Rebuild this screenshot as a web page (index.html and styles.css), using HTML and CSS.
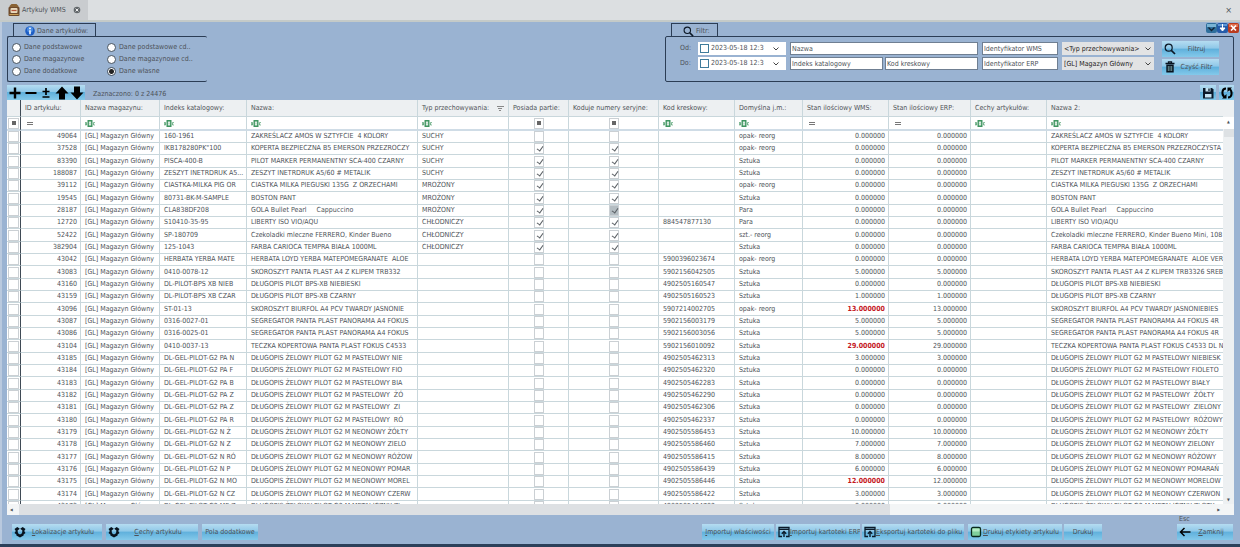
FILE: index.html
```html
<!DOCTYPE html>
<html lang="pl">
<head>
<meta charset="utf-8">
<title>Artykuły WMS</title>
<link rel="stylesheet" href="styles.css">
</head>
<body>
<svg class="defs" aria-hidden="true">
  <symbol id="search" viewBox="0 0 12 12"><circle cx="4.7" cy="4.7" r="3.5" fill="none" stroke="#0c1826" stroke-width="1.2"/><path d="M7.3 7.3 11 11" stroke="#0c1826" stroke-width="1.7"/></symbol>
  <symbol id="box" viewBox="0 0 12 12"><path d="M3.300 1 5.800 2.800 3.600 4.600 4 7.200 6 8.400 8 7.200 8.400 4.600 6.200 2.800 8.700 1 11.500 3 10.200 5 11.500 7 9.600 8.400 9.600 9.400 6 11.600 2.400 9.400 2.400 8.400 .5 7 1.800 5 .5 3z" fill="#08131f"/></symbol>
  <symbol id="window" viewBox="0 0 12 12"><path d="M4 10.500H1V1.500h10v9H8M1 3.300h10" fill="none" stroke="#0a1a2a" stroke-width="1.300"/><path d="M6 11V6M3.800 7.800 6 5.500 8.200 7.800" fill="none" stroke="#0a1a2a" stroke-width="1.400"/></symbol>
  <symbol id="chevron" viewBox="0 0 8 8"><path d="M1.500 2.500 4 5 6.500 2.500" fill="none" stroke="#444" stroke-width="1"/></symbol>
  <symbol id="abc" viewBox="0 0 10 7"><rect x="2.500" width="5" height="7" fill="#3f9560"/><rect x="4.300" y="2" width="1.400" height="3" fill="none" stroke="#fff" stroke-width=".8"/><path d="M.3 2.500h1.200v2.500H.3zM9.800 2.500H8.600v2.500h1.200" fill="none" stroke="#4a9a68" stroke-width=".8"/></symbol>
  <symbol id="equals" viewBox="0 0 10 7"><path d="M2 2.500h6M2 4.500h6" stroke="#777" stroke-width="1"/></symbol>
</svg>
<div class="app">
  <header class="tabs">
    <div class="tab">
      <svg class="tab-icon" viewBox="0 0 11 12"><path d="M1 2 3 0h5l2 2v2H1z" fill="#8a6335"/><rect y="3" width="11" height="9" rx="1" fill="#6f4a2c"/><rect x="2" y="4" width="7" height="5" rx="1" fill="#e8d9bd"/><path d="M3 6.500h5" stroke="#b5553c" stroke-width="1.200"/><path d="M1 10.500h9" stroke="#c79a55"/></svg>
      <span>Artykuły WMS</span>
      <button class="tab-close" aria-label="Zamknij kartę"><svg viewBox="0 0 8 8"><circle cx="4" cy="4" r="3.300" fill="#62676b"/><path d="M2.600 2.600 5.400 5.400M5.400 2.600 2.600 5.400" stroke="#eee" stroke-width="1"/></svg></button>
    </div>
    <button class="all-close" aria-label="Zamknij">×</button>
  </header>

  <main class="body">
    <div class="window-buttons">
      <button aria-label="Minimalizuj"><svg viewBox="0 0 11 10"><rect width="11" height="10" rx="2" fill="#2e6f9c"/><path d="M1 1h9v3H1z" fill="#79b4d5"/><path d="M2.500 4.500 5.500 7.500 8.500 4.500" fill="none" stroke="#123" stroke-width="1.300"/></svg></button>
      <button aria-label="Przywróć"><svg viewBox="0 0 11 10"><rect width="11" height="10" rx="2" fill="#245ba8"/><path d="M1 1h9v2H1z" fill="#5d97d6"/><path d="M5.500 1v4M3 5h5L5.500 8z" fill="#fff" stroke="#fff"/></svg></button>
      <button aria-label="Zamknij okno"><svg viewBox="0 0 11 10"><rect width="11" height="10" rx="2" fill="#b93a1d"/><path d="M1 1h9v3H1z" fill="#e0714f"/><path d="M3 2.500 8 7.500M8 2.500 3 7.500" stroke="#fff" stroke-width="1.700"/></svg></button>
    </div>

    <div class="panels">
      <fieldset class="panel data-panel">
        <legend class="panel-title"><svg class="icon-10" viewBox="0 0 10 10"><circle cx="5" cy="5" r="4.800" fill="#1e5ec4"/><circle cx="5" cy="3.500" r="3" fill="#4a8be0"/><path d="M5 4.200v4" stroke="#fff" stroke-width="1.500"/><circle cx="5" cy="2.400" r=".9" fill="#fff"/></svg>Dane artykułów:</legend>
        <div class="panel-box radios">
          <label><input type="radio" name="data">Dane podstawowe</label>
          <label><input type="radio" name="data">Dane podstawowe cd..</label>
          <label><input type="radio" name="data">Dane magazynowe</label>
          <label><input type="radio" name="data">Dane magazynowe cd..</label>
          <label><input type="radio" name="data">Dane dodatkowe</label>
          <label><input type="radio" name="data" checked>Dane własne</label>
        </div>
      </fieldset>

      <fieldset class="panel filter-panel">
        <legend class="panel-title"><svg class="icon-11"><use href="#search"/></svg>Filtr:</legend>
        <div class="panel-box filters">
          <div class="dates">
            <label for="from">Od:</label>
            <div class="date"><input type="checkbox" class="date-check" aria-label="Użyj daty od"><input id="from" type="text" value="2023-05-18 12:3"><button aria-label="Wybierz datę"><svg><use href="#chevron"/></svg></button></div>
            <label for="to">Do:</label>
            <div class="date"><input type="checkbox" class="date-check" aria-label="Użyj daty do"><input id="to" type="text" value="2023-05-18 12:3"><button aria-label="Wybierz datę"><svg><use href="#chevron"/></svg></button></div>
          </div>
          <div class="texts">
            <input class="wide" type="text" placeholder="Nazwa" aria-label="Nazwa">
            <input type="text" placeholder="Indeks katalogowy" aria-label="Indeks katalogowy">
            <input type="text" placeholder="Kod kreskowy" aria-label="Kod kreskowy">
          </div>
          <div class="stack idents">
            <input type="text" placeholder="Identyfikator WMS" aria-label="Identyfikator WMS">
            <input type="text" placeholder="Identyfikator ERP" aria-label="Identyfikator ERP">
          </div>
          <div class="stack selects">
            <div class="select"><select aria-label="Typ przechowywania"><option>&lt;Typ przechowywania&gt;</option></select><svg><use href="#chevron"/></svg></div>
            <div class="select"><select aria-label="Magazyn"><option>[GL] Magazyn Główny</option></select><svg><use href="#chevron"/></svg></div>
          </div>
          <div class="stack actions">
            <button class="glossy"><svg><use href="#search"/></svg><span>Filtruj</span></button>
            <button class="glossy"><svg viewBox="0 0 12 12"><path d="M1.500 2.500h9M4.500 2V.8h3V2" fill="none" stroke="#08131f" stroke-width="1.300"/><path d="M2.300 3.500h7.400v8H2.300z" fill="#08131f"/><path d="M4.300 5v5M6 5v5M7.700 5v5" stroke="#9cc" stroke-width=".7"/></svg><span>Czyść Filtr</span></button>
          </div>
        </div>
      </fieldset>
    </div>

    <div class="toolbar">
      <div class="tools">
        <button class="glossy" aria-label="Zaznacz"><svg viewBox="0 0 14 14"><path d="M7 1.500v11M1.500 7h11" stroke="#000" stroke-width="2.400"/></svg></button>
        <button class="glossy" aria-label="Odznacz"><svg viewBox="0 0 14 14"><path d="M1.500 7h11" stroke="#000" stroke-width="2"/></svg></button>
        <button class="glossy" aria-label="Odwróć"><svg viewBox="0 0 14 14"><path d="M7 2v7M3.500 5.500h7M3.500 11h7" stroke="#000" stroke-width="1.700"/></svg></button>
        <button class="glossy" aria-label="W górę"><svg viewBox="0 0 14 14"><path d="M7 .5 13.500 7.500H10V13.500H4V7.500H.5z"/></svg></button>
        <button class="glossy" aria-label="W dół"><svg viewBox="0 0 14 14"><path d="M7 13.500 13.500 6.500H10V.5H4v6H.5z"/></svg></button>
      </div>
      <span class="count">Zaznaczono: 0 z 24476</span>
      <div class="tools right">
        <button class="glossy" aria-label="Zapisz"><svg viewBox="0 0 14 14"><path d="M2 2h9l1.500 1.500V12.500H2z" fill="#0a1a2a"/><path d="M4.500 2h5v3.500h-5zM4 8h6.500v3.500H4z" fill="#c5e4f3"/><path d="M8 2.500v2.500" stroke="#0a1a2a" stroke-width="1.300"/></svg></button>
        <button class="glossy" aria-label="Odśwież"><svg viewBox="0 0 14 14"><path d="M6 2.500C1.500 2.500 1.500 9 4.500 11M8 11.500c4.500 0 4.500-6.500 1.500-8.500" fill="none" stroke="#000" stroke-width="2"/><path d="M2 12.500h4.500V8zM12 1.500H7.500V6z"/></svg></button>
      </div>
    </div>

    <section class="grid">
      <div class="view">
        <table>
          <colgroup><col class="c-check"><col class="c-id"><col class="c-store"><col class="c-index"><col class="c-name"><col class="c-type"><col class="c-batch"><col class="c-serial"><col class="c-code"><col class="c-unit"><col class="c-wms"><col class="c-erp"><col class="c-feat"><col></colgroup>
          <thead>
            <tr class="head"><th></th><th>ID artykułu:</th><th>Nazwa magazynu:</th><th>Indeks katalogowy:</th><th>Nazwa:</th><th><span class="sorted">Typ przechowywania:<svg viewBox="0 0 7 7"><path d="M0 1.500h7M1 3.500H5M2 5.500H4" stroke="#888"/></svg></span></th><th>Posiada partie:</th><th>Koduje numery seryjne:</th><th>Kod kreskowy:</th><th>Domyślna j.m.:</th><th>Stan ilościowy WMS:</th><th>Stan ilościowy ERP:</th><th>Cechy artykułów:</th><th>Nazwa 2:</th></tr>
            <tr class="filter-row" id="filters"></tr>
          </thead>
          <tbody id="rows"></tbody>
        </table>
      </div>
      <div class="vscroll"><span>▲</span><i></i><span>▼</span></div>
      <div class="hscroll"><span>◀</span><i></i><span>▶</span></div>
    </section>

    <footer class="footer">
      <button class="glossy f-loc"><svg><use href="#box"/></svg><span><u>L</u>okalizacje artykułu</span></button>
      <button class="glossy f-feat"><svg><use href="#box"/></svg><span><u>C</u>echy artykułu</span></button>
      <button class="glossy f-extra"><span>Pola dodatkowe</span></button>
      <button class="glossy f-imp push"><span><u>I</u>mportuj właściwości</span></button>
      <button class="glossy f-erp"><svg><use href="#window"/></svg><span><u>I</u>mportuj kartoteki ERP</span></button>
      <button class="glossy f-exp"><svg><use href="#window"/></svg><span><u>E</u>ksportuj kartoteki do pliku</span></button>
      <button class="glossy f-labels"><svg viewBox="0 0 12 12"><rect x="1.500" y="1.500" width="9" height="9" rx="1.500" fill="#7fd09a" stroke="#0a2a1c" stroke-width="1.300"/><path d="M2.500 2.500h7v3h-7z" fill="#b5ecc4"/></svg><span><u>D</u>rukuj etykiety artykułu</span></button>
      <button class="glossy f-print"><span>Drukuj</span></button>
      <div class="close-box"><span class="esc">Esc</span><button class="glossy"><svg viewBox="0 0 12 12"><path d="M11.500 6H2M5.500 2 1.500 6 5.500 10" fill="none" stroke="#000" stroke-width="1.500"/></svg><span><u>Z</u>amknij</span></button></div>
    </footer>
  </main>
</div>
<script src="app.js"></script>
</body>
</html>
```

FILE: styles.css
```css
:root {
  --font: "DejaVu Sans Condensed", "Noto Sans", sans-serif;
  --ink: #4d5258;
  --blue: #9ab3d2;
  --frame: #2b3d55;
  --line: #c9d7dc;
}

* { box-sizing: border-box; }

body {
  margin: 0;
  font: 7px/12px var(--font);
  color: var(--ink);
}

button, input, select {
  font: inherit;
  color: inherit;
  margin: 0;
  padding: 0;
  border: 0;
  min-width: 0;
}

button { background: none; cursor: pointer; }
svg { display: block; flex: none; }
.defs { position: absolute; width: 0; height: 0; }

.app {
  display: flex;
  flex-direction: column;
  height: 100vh;
  background: var(--blue);
  border-bottom: 3px solid #2c405a;
}

/* tab strip */
.tabs {
  display: flex;
  justify-content: space-between;
  align-items: center;
  height: 22px;
  flex: none;
  background: #dcdfe1;
  border-bottom: 2px solid #c4cac8;
}

.tab {
  display: flex;
  align-items: center;
  gap: 2px;
  height: 20px;
  padding: 0 7px 0 8px;
  background: #c9cccf;
}

.tab-icon { width: 12px; height: 12px; }
.tab-close { margin-left: 5px; }
.tab-close svg { width: 8px; height: 8px; }
.all-close { font-size: 9px; padding-right: 8px; }

.body {
  position: relative;
  display: flex;
  flex-direction: column;
  flex: 1;
  min-height: 0;
  padding: 1px 6px 0 5px;
  border-left: 2px solid #b9c9de;
}

.window-buttons {
  position: absolute;
  top: 1px;
  right: 1px;
  display: flex;
}

.window-buttons svg { width: 11px; height: 10px; }

/* upper panels */
.panels { display: flex; justify-content: space-between; }

.panel {
  margin: 0;
  padding: 0;
  border: 0;
  min-width: 0;
}

.data-panel { width: 200px; }
.filter-panel { width: 569px; }

.panel-title {
  display: flex;
  align-items: center;
  gap: 2px;
  height: 13px;
  margin-left: 6px;
  padding: 2px 7px 0 11px;
  border: 1px solid var(--frame);
  border-bottom: 0;
}

.icon-10 { width: 10px; height: 10px; }
.icon-11 { width: 11px; height: 11px; }

.panel-box {
  height: 46px;
  border: 1px solid var(--frame);
  border-radius: 2px;
}

.radios {
  display: grid;
  grid-template-columns: 95px 1fr;
  align-content: start;
  padding: 4px 0 0 4px;
  border-right: 0;
}

.radios label { display: flex; align-items: center; gap: 3px; height: 12px; }

.radios input {
  appearance: none;
  width: 9px;
  height: 9px;
  border: 1px solid #45525f;
  border-radius: 50%;
  background: #fff;
}

.radios input:checked { background: radial-gradient(#222 0 2px, #fff 3px); }

.filters { display: flex; align-items: flex-start; gap: 4px; padding: 4px 14px 0 14px; }

.dates {
  display: grid;
  grid-template-columns: 15px 88px;
  gap: 2px 3px;
  line-height: 13px;
  padding-top: 1px;
}

.date {
  display: flex;
  align-items: center;
  gap: 2px;
  height: 13px;
  padding: 0 6px 0 2px;
  background: #fff;
}

.date-check {
  appearance: none;
  width: 9px;
  height: 9px;
  border: 1px solid #3f7c9c;
  flex: none;
}

.date input[type="text"] { flex: 1; width: 20px; }
.date svg, .select svg { width: 8px; height: 8px; }

.texts {
  display: grid;
  grid-template-columns: 1fr 1fr;
  gap: 2px;
  flex: 1;
  padding-top: 1px;
}

.texts input, .idents input {
  height: 13px;
  padding: 0 1px;
  background: #fff;
  border: 1px solid #6f7f92;
}

.wide { grid-column: span 2; }
input::placeholder { color: var(--ink); opacity: 1; }

.stack { display: flex; flex-direction: column; gap: 2px; padding-top: 1px; }
.idents { width: 76px; }
.selects { width: 92px; }
.actions { width: 61px; gap: 2px; padding: 0 0 0 4px; }

.select {
  display: flex;
  align-items: center;
  height: 13px;
  padding: 0 2px;
  background: #e2e3e4;
  color: #222;
}

.select select { appearance: none; flex: 1; background: none; }

.glossy {
  display: flex;
  align-items: center;
  height: 16px;
  padding: 0 2px;
  overflow: hidden;
  white-space: nowrap;
  background: linear-gradient(#b5dcf1, #8fc8e8 45%, #5fb0dc 50%, #84c9ea);
}

.glossy svg { width: 12px; height: 12px; }
.glossy span { flex: 1; text-align: center; }

/* toolbar */
.toolbar {
  display: flex;
  align-items: center;
  gap: 8px;
  height: 18px;
  flex: none;
  padding-top: 3px;
}

.tools { display: flex; }
.tools .glossy { height: 15px; justify-content: center; padding: 0; width: 16px; }
.tools .glossy:nth-child(2n) { width: 15px; }
.tools svg { width: 14px; height: 14px; }
.tools.right { margin-left: auto; gap: 3px; }
.count { padding-top: 3px; }

/* data grid */
.grid {
  display: grid;
  grid-template: minmax(0, 1fr) 11px / minmax(0, 1fr) 11px;
  flex: 1;
  min-height: 0;
  background: #fff;
}

.view { overflow: hidden; }

table {
  width: 100%;
  table-layout: fixed;
  border-collapse: separate;
  border-spacing: 0;
}

.c-check { width: 14px; }
.c-id { width: 60px; }
.c-store { width: 79px; }
.c-index { width: 87px; }
.c-name { width: 171px; }
.c-type { width: 91px; }
.c-batch { width: 60px; }
.c-serial { width: 90px; }
.c-code { width: 76px; }
.c-unit { width: 68px; }
.c-wms { width: 86px; }
.c-erp { width: 82px; }
.c-feat { width: 76px; }

th, td {
  height: 12px;
  padding: 0 4px;
  overflow: hidden;
  white-space: pre;
  line-height: 11px;
  font-weight: 400;
  text-align: left;
  border-right: 1px solid var(--line);
  border-bottom: 1px solid var(--line);
}

th:first-child, td:first-child { padding: 0 1px; border-right: 1px solid #3f4a55; }
th:last-child, td:last-child { border-right: 0; padding-right: 0; }
.head th { height: 17px; background: #edf0f2; line-height: 16px; }
.filter-row td { height: 14px; border-bottom: 2px solid #cfdce6; }
.filter-row svg { width: 10px; height: 7px; }
tbody tr:nth-child(3n) td { height: 13px; }

.sorted { display: flex; justify-content: space-between; align-items: center; }
.sorted svg { width: 7px; height: 7px; }

td.num { text-align: right; padding-right: 3px; }
td.mid { text-align: center; }
td.alert { color: #c4161c; font-weight: 700; }

td input {
  appearance: none;
  display: block;
  width: 11px;
  height: 11px;
  border: 1px solid #cbd0d4;
  background: #fff;
}

td.mid input { width: 10px; margin: 0 auto; }
td input:checked::before {
  content: "";
  display: block;
  width: 3px;
  height: 5px;
  margin: 1px 0 0 3px;
  border: solid #5b6065;
  border-width: 0 1px 1px 0;
  transform: rotate(35deg);
}
td input.focus:checked { background: #b4bdc2; }
td input.mixed { background: linear-gradient(#666, #666) center / 4px 4px no-repeat #fff; }

.vscroll, .hscroll {
  display: flex;
  align-items: center;
  justify-content: space-between;
  background: #f3f5f6;
  font-size: 4px;
  line-height: 8px;
}

.vscroll { flex-direction: column; padding-top: 17px; background: #edf0f2; }
.vscroll span:first-child { background: #fff; align-self: stretch; text-align: center; padding: 1px 0 3px; }
.vscroll i { width: 10px; height: 8px; margin-bottom: auto; background: #dde1e4; }
.hscroll { grid-column: span 2; padding: 0 14px 0 3px; }
.hscroll i { width: 871px; height: 11px; margin: 0 auto 0 6px; background: #dde0e3; }

/* footer */
.footer {
  display: flex;
  align-items: flex-end;
  gap: 2px;
  height: 29px;
  flex: none;
  padding: 0 1px 4px 5px;
}

.push { margin-left: auto; }
.f-loc { width: 90px; margin-right: 2px; }
.f-feat { width: 92px; margin-right: 2px; }
.f-extra { width: 56px; }
.f-imp { width: 72px; }
.f-erp { width: 84px; }
.f-exp { width: 102px; }
.f-labels { width: 94px; margin-left: 2px; }
.f-print { width: 38px; }
.close-box { width: 56px; margin-left: 73px; }
.close-box .glossy { width: 100%; }
.esc { display: block; padding-left: 2px; line-height: 9px; }
```

FILE: app.js
```js
const P = 'DŁUGOPIS ŻELOWY PILOT G2 M ';
// id, index, name, type, checked, barcode, unit, WMS stock, second name
const items = [
  [49064, '160-1961', 'ZAKREŚLACZ AMOS W SZTYFCIE  4 KOLORY', 'SUCHY', 0, '', 'opak- reorg', 0],
  [37528, 'IKB178280PK"100', 'KOPERTA BEZPIECZNA B5 EMERSON PRZEZROCZY', 'SUCHY', 1, '', 'opak- reorg', 0, 'KOPERTA BEZPIECZNA B5 EMERSON PRZEZROCZYSTA'],
  [83390, 'PISCA-400-B', 'PILOT MARKER PERMANENTNY SCA-400 CZARNY', 'SUCHY', 1, '', 'Sztuka', 0],
  [188087, 'ZESZYT INETRDRUK A5...', 'ZESZYT INETRDRUK A5/60 # METALIK', 'SUCHY', 1, '', 'Sztuka', 0],
  [39112, 'CIASTKA-MILKA PIG OR', 'CIASTKA MILKA PIEGUSKI 135G  Z ORZECHAMI', 'MROŻONY', 1, '', 'opak- reorg', 0],
  [19545, '80731-BK-M-SAMPLE', 'BOSTON PANT', 'MROŻONY', 1, '', 'Sztuka', 0],
  [28187, 'CLA838DF208', 'GOLA Bullet Pearl     Cappuccino', 'MROŻONY', 1, '', 'Para', 0],
  [12720, 'S10410-35-95', 'LIBERTY ISO VIO/AQU', 'CHŁODNICZY', 1, '884547877130', 'Para', 0],
  [52422, 'SP-180709', 'Czekoladki mleczne FERRERO, Kinder Bueno', 'CHŁODNICZY', 1, '', 'szt.- reorg', 0, 'Czekoladki mleczne FERRERO, Kinder Bueno Mini, 108 g'],
  [382904, '125-1043', 'FARBA CARIOCA TEMPRA BIAŁA 1000ML', 'CHŁODNICZY', 1, '', 'Sztuka', 0],
  [43042, 'HERBATA YERBA MATE', 'HERBATA LOYD YERBA MATEPOMEGRANATE  ALOE', '', 0, '5900396023674', 'opak- reorg', 0, 'HERBATA LOYD YERBA MATEPOMEGRANATE  ALOE VER'],
  [43083, '0410-0078-12', 'SKOROSZYT PANTA PLAST A4 Z KLIPEM TRB332', '', 0, '5902156042505', 'Sztuka', 5, 'SKOROSZYT PANTA PLAST A4 Z KLIPEM TRB3326 SREB'],
  [43160, 'DL-PILOT-BPS XB NIEB', 'DŁUGOPIS PILOT BPS-XB NIEBIESKI', '', 0, '4902505160547', 'Sztuka', 0],
  [43159, 'DL-PILOT-BPS XB CZAR', 'DŁUGOPIS PILOT BPS-XB CZARNY', '', 0, '4902505160523', 'Sztuka', 1],
  [43096, 'ST-01-13', 'SKOROSZYT BIURFOL A4 PCV TWARDY JASNONIE', '', 0, '5907214002705', 'opak- reorg', 13, 'SKOROSZYT BIURFOL A4 PCV TWARDY JASNONIEBIES'],
  [43087, '0316-0027-01', 'SEGREGATOR PANTA PLAST PANORAMA A4 FOKUS', '', 0, '5902156003179', 'Sztuka', 5, 'SEGREGATOR PANTA PLAST PANORAMA A4 FOKUS 4R'],
  [43086, '0316-0025-01', 'SEGREGATOR PANTA PLAST PANORAMA A4 FOKUS', '', 0, '5902156003056', 'Sztuka', 5, 'SEGREGATOR PANTA PLAST PANORAMA A4 FOKUS 4R'],
  [43104, '0410-0037-13', 'TECZKA KOPERTOWA PANTA PLAST FOKUS C4533', '', 0, '5902156010092', 'Sztuka', 29, 'TECZKA KOPERTOWA PANTA PLAST FOKUS C4533 DL N'],
  [43185, 'DL-GEL-PILOT-G2 PA N', P + 'PASTELOWY NIE', '', 0, '4902505462313', 'Sztuka', 3, P + 'PASTELOWY NIEBIESK'],
  [43184, 'DL-GEL-PILOT-G2 PA F', P + 'PASTELOWY FIO', '', 0, '4902505462320', 'Sztuka', 0, P + 'PASTELOWY FIOLETO'],
  [43183, 'DL-GEL-PILOT-G2 PA B', P + 'PASTELOWY BIA', '', 0, '4902505462283', 'Sztuka', 0, P + 'PASTELOWY BIAŁY'],
  [43182, 'DL-GEL-PILOT-G2 PA Z', P + 'PASTELOWY  ŻÓ', '', 0, '4902505462290', 'Sztuka', 0, P + 'PASTELOWY  ŻÓŁTY'],
  [43181, 'DL-GEL-PILOT-G2 PA Z', P + 'PASTELOWY  ZI', '', 0, '4902505462306', 'Sztuka', 0, P + 'PASTELOWY  ZIELONY'],
  [43180, 'DL-GEL-PILOT-G2 PA R', P + 'PASTELOWY  RÓ', '', 0, '4902505462337', 'Sztuka', 0, P + 'PASTELOWY  RÓŻOWY'],
  [43179, 'DL-GEL-PILOT-G2 N Ż', P + 'NEONOWY ŻÓŁTY', '', 0, '4902505586453', 'Sztuka', 10],
  [43178, 'DL-GEL-PILOT-G2 N Z', P + 'NEONOWY ZIELO', '', 0, '4902505586460', 'Sztuka', 7, P + 'NEONOWY ZIELONY'],
  [43177, 'DL-GEL-PILOT-G2 N RÓ', P + 'NEONOWY RÓŻOW', '', 0, '4902505586415', 'Sztuka', 8, P + 'NEONOWY RÓŻOWY'],
  [43176, 'DL-GEL-PILOT-G2 N P', P + 'NEONOWY POMAR', '', 0, '4902505586439', 'Sztuka', 6, P + 'NEONOWY POMARAŃ'],
  [43175, 'DL-GEL-PILOT-G2 N MO', P + 'NEONOWY MOREL', '', 0, '4902505586446', 'Sztuka', 12, P + 'NEONOWY MORELOW'],
  [43174, 'DL-GEL-PILOT-G2 N CZ', P + 'NEONOWY CZERW', '', 0, '4902505586422', 'Sztuka', 3, P + 'NEONOWY CZERWON'],
  [43173, 'DL-GEL-PILOT-G2 ME Z', P + 'METALICZNY ZŁ', '', 0, '4902505404702', 'Sztuka', 0, P + 'METALICZNY ZŁOTY'],
];

const cell = (text, cls = '') => `<td class="${cls}">${text}</td>`;
const check = (label, cls, on) =>
  `<input type="checkbox" aria-label="${label}" class="${cls}"${on ? ' checked' : ''}>`;

document.getElementById('rows').innerHTML = items.map(r => {
  const [id, index, name, type, on, code, unit, qty, name2 = name] = r;
  const alert = [13, 29, 12].includes(qty) ? ' alert' : '';
  return '<tr>' + cell(check('Zaznacz ' + id, '', false)) + cell(id, 'num') +
    cell('[GL] Magazyn Główny') + cell(index) + cell(name) + cell(type) +
    cell(check('Posiada partie', '', on), 'mid') +
    cell(check('Koduje numery seryjne', id === 28187 ? 'focus' : '', on), 'mid') +
    cell(code) + cell(unit) + cell(qty.toFixed(6), 'num' + alert) +
    cell(qty.toFixed(6), 'num') + cell('') + cell(name2) + '</tr>';
}).join('');

const abc = '<svg><use href="#abc"/></svg>';
const equals = '<svg><use href="#equals"/></svg>';
const any = check('Filtr', 'mixed', false);
document.getElementById('filters').innerHTML =
  [any, equals, abc, abc, abc, abc, any, any, abc, abc, equals, equals, abc, abc]
    .map((c, i) => cell(c, i === 6 || i === 7 ? 'mid' : '')).join('');
```
